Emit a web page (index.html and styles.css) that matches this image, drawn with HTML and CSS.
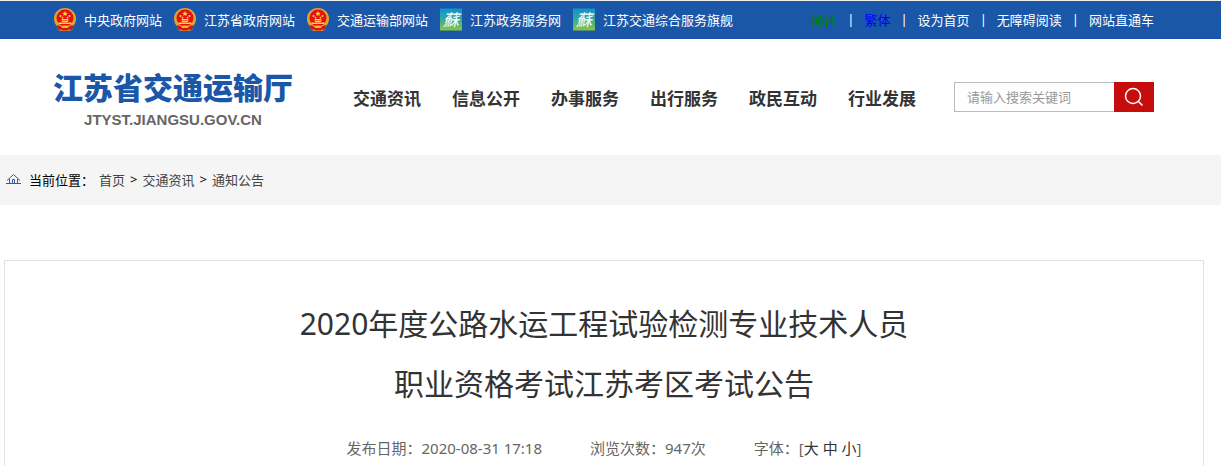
FILE: index.html
```html
<!DOCTYPE html>
<html lang="zh-CN">
<head>
  <meta charset="UTF-8">
  <meta name="viewport" content="width=device-width, initial-scale=1.0">
  <title>2020年度公路水运工程试验检测专业技术人员职业资格考试江苏考区考试公告</title>
  <link rel="stylesheet" href="styles.css">
</head>
<body>
  <svg class="defs" width="0" height="0" aria-hidden="true">
    <defs>
      <linearGradient id="sky" x1="0" y1="0" x2="0" y2="1">
        <stop offset="0" stop-color="#0e93cf"/>
        <stop offset="0.5" stop-color="#35a99a"/>
        <stop offset="1" stop-color="#8cc63a"/>
      </linearGradient>
      <symbol id="emblem" viewBox="0 0 22 23">
        <path d="M11 0C5 0 0 4.500 0 10.500c0 4 1.500 6.500 4 8.500l-.5 3 4.500 1h6l4.500-1-.5-3c2.500-2 4-4.500 4-8.500C22 4.500 17 0 11 0z" fill="#e0a52c"/>
        <circle cx="11" cy="10" r="8.500" fill="#e01212"/>
        <path d="M11 3l.8 1.700 1.900.2-1.400 1.300.4 1.900-1.700-1-1.700 1 .4-1.900-1.400-1.300 1.900-.2z" fill="#ffd735"/>
        <g fill="#ffd735">
          <circle cx="6.500" cy="8" r="1"/><circle cx="8.500" cy="9.700" r=".9"/>
          <circle cx="13.500" cy="9.700" r=".9"/><circle cx="15.500" cy="8" r="1"/>
          <path d="M8 11h6l1 1.500H7zM8 13h6v1H8zM4.500 14.500h13v1.500h-13z"/>
        </g>
        <path d="M3 17c2.500.5 4 1 5 2.500h6c1-1.500 2.500-2 5-2.500l-1 5-3-.5-1.500 1h-5L7 21.500 4 22z" fill="#d81414"/>
        <path d="M7 18.500c1-1.500 7-1.500 8 0l-1.500 1.500h-5z" fill="#f2b92e"/>
      </symbol>
      <symbol id="service" viewBox="0 0 23 23">
        <rect width="23" height="23" fill="url(#sky)"/>
        <text class="service-char" x="3" y="18">蘇</text>
      </symbol>
    </defs>
  </svg>

  <div class="topbar">
    <div class="container topbar-inner">
      <nav class="sites">
        <a href="#"><svg><use href="#emblem"/></svg>中央政府网站</a>
        <a href="#"><svg><use href="#emblem"/></svg>江苏省政府网站</a>
        <a href="#"><svg><use href="#emblem"/></svg>交通运输部网站</a>
        <a href="#"><svg><use href="#service"/></svg>江苏政务服务网</a>
        <a href="#"><svg><use href="#service"/></svg>江苏交通综合服务旗舰</a>
      </nav>
      <nav class="tools">
        <a href="#" class="simplified">简体</a>
        <span>|</span>
        <a href="#" class="traditional">繁体</a>
        <span>|</span>
        <a href="#">设为首页</a>
        <span>|</span>
        <a href="#">无障碍阅读</a>
        <span>|</span>
        <a href="#">网站直通车</a>
      </nav>
    </div>
  </div>

  <header class="header">
    <div class="container header-inner">
      <a href="#" class="logo">
        <span class="logo-name">江苏省交通运输厅</span>
        <span class="logo-domain">JTYST.JIANGSU.GOV.CN</span>
      </a>
      <nav class="menu">
        <a href="#">交通资讯</a>
        <a href="#">信息公开</a>
        <a href="#">办事服务</a>
        <a href="#">出行服务</a>
        <a href="#">政民互动</a>
        <a href="#">行业发展</a>
      </nav>
      <form class="search">
        <input type="text" placeholder="请输入搜索关键词" aria-label="请输入搜索关键词">
        <button type="button" aria-label="搜索">
          <svg width="20" height="20" viewBox="0 0 20 20" fill="none" stroke="#fff" stroke-width="1.500">
            <circle cx="9" cy="9" r="7.500"/>
            <path d="M14 14l4.500 4.500"/>
          </svg>
        </button>
      </form>
    </div>
  </header>

  <div class="location">
    <svg width="15" height="12" viewBox="0 0 15 12" fill="none" stroke="#2f5a9c">
      <path d="M1 7.500L7.500 1.500 14 7.500M0 10.500h15M3.500 6v4.500M11.500 6v4.500M6.500 10.500v-4h2v4"/>
    </svg>
    <span>当前位置：</span>
    <a href="#">首页</a>
    <span>&gt;</span>
    <a href="#">交通资讯</a>
    <span>&gt;</span>
    <a href="#">通知公告</a>
  </div>

  <main class="article">
    <h1>2020年度公路水运工程试验检测专业技术人员<br>职业资格考试江苏考区考试公告</h1>
    <div class="meta">
      <span>发布日期：2020-08-31 17:18</span>
      <span>浏览次数：947次</span>
      <span>字体：[<a href="#">大</a> <a href="#">中</a> <a href="#">小</a>]</span>
    </div>
  </main>
</body>
</html>
```
FILE: styles.css
```css
* {
  box-sizing: border-box;
}

body {
  margin: 0;
  font-family: "Noto Sans", "Noto Sans CJK SC", sans-serif;
  font-size: 13px;
  color: #000;
  background: #fff;
  overflow-x: hidden;
}

a {
  color: inherit;
  text-decoration: none;
}

.defs {
  position: absolute;
}

.topbar,
.header {
  padding-right: 13px;
}

.container {
  max-width: 1100px;
  margin: 0 auto;
}

/* top bar */
.topbar {
  background: #1a57a8;
  border-top: 1px solid #eee;
  color: #fff;
}

.topbar-inner {
  display: flex;
  justify-content: space-between;
  align-items: center;
  height: 38px;
  padding-bottom: 2px;
  white-space: nowrap;
}

.sites {
  display: flex;
  gap: 12px;
}

.tools {
  display: flex;
  gap: 10px;
}

.sites a {
  display: flex;
  align-items: center;
  gap: 8px;
}

.sites svg {
  width: 22px;
  height: 23px;
}

.service-char {
  font-size: 17px;
  font-style: italic;
  fill: #fff;
}

.tools .simplified {
  color: green;
}

.tools .traditional {
  color: blue;
}

/* header */
.header-inner {
  display: flex;
  align-items: center;
  height: 116px;
}

.logo {
  display: flex;
  flex-direction: column;
  align-items: center;
  width: 238px;
  padding-top: 10px;
  white-space: nowrap;
}

.logo-name {
  font-size: 30px;
  font-weight: 900;
  line-height: 36px;
  color: #1a57a8;
}

.logo-domain {
  font-family: "Liberation Sans", Arial, sans-serif;
  font-size: 15px;
  font-weight: bold;
  line-height: 28px;
  color: #666;
}

.menu {
  display: flex;
  gap: 31px;
  margin-left: 61px;
  font-size: 17px;
  font-weight: bold;
  color: #333;
  white-space: nowrap;
}

.search {
  display: flex;
  width: 200px;
  height: 30px;
  margin-left: auto;
}

.search input {
  flex: 1;
  min-width: 0;
  padding: 0 12px;
  border: 1px solid #bbb;
  border-right: 0;
  font: inherit;
}

.search input::placeholder {
  color: #999;
}

.search button {
  display: flex;
  align-items: center;
  justify-content: center;
  width: 40px;
  padding: 0;
  border: 0;
  background: #c70c0c;
  cursor: pointer;
}

/* breadcrumb */
.location {
  display: flex;
  align-items: center;
  gap: 5px;
  height: 50px;
  padding: 0 0 2px 6px;
  background: #f5f5f5;
}

.location svg {
  margin-right: 3px;
}

.location a {
  color: #444;
}

/* article */
.article {
  max-width: 1200px;
  margin: 55px 17px 0 4px;
  padding: 33px 20px 40px;
  border: 1px solid #e2e2e2;
  text-align: center;
}

.article h1 {
  margin: 0;
  font-size: 30px;
  font-weight: normal;
  line-height: 60px;
  color: #333;
}

.meta {
  display: flex;
  justify-content: center;
  gap: 48px;
  padding-top: 20px;
  font-size: 15px;
  line-height: 28px;
  color: #666;
}

.meta a {
  color: #333;
}

/* the page still scrolls, without a visible bar */
html {
  scrollbar-width: none;
}
```
